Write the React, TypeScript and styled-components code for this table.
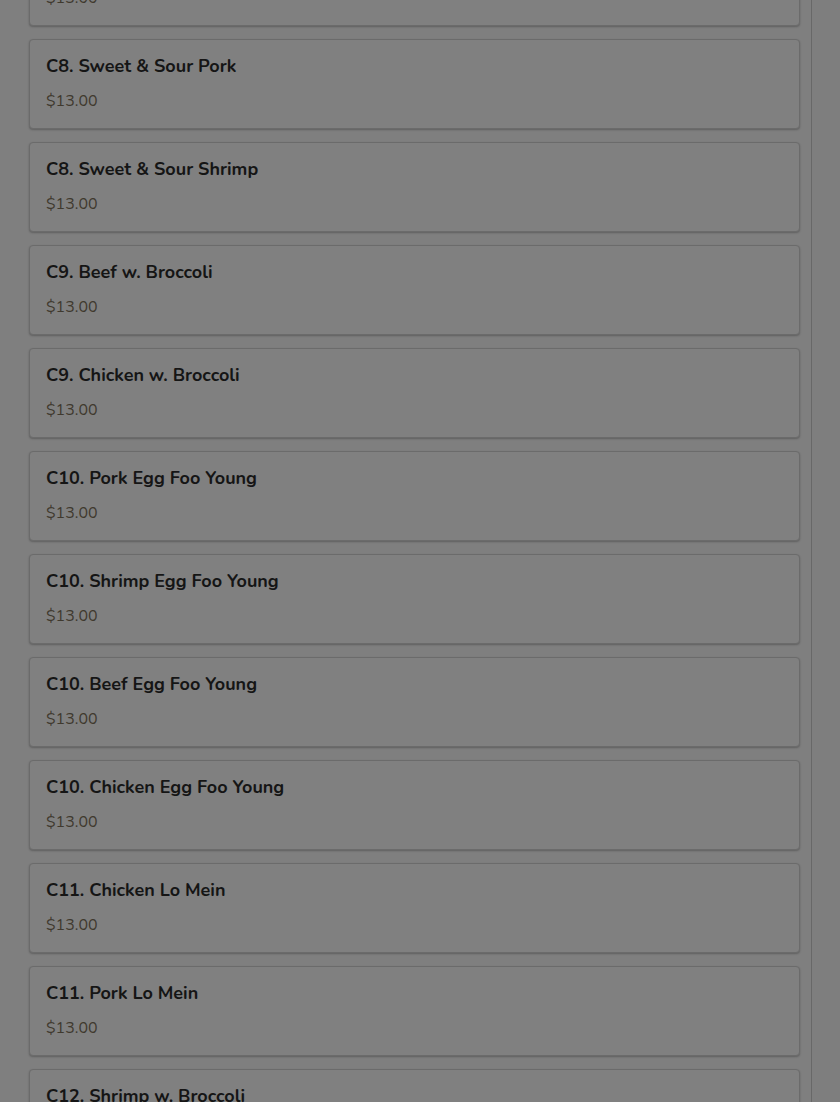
import styled, { createGlobalStyle } from 'styled-components';

const GlobalStyle = createGlobalStyle`
    html, body {
        margin: 0;
        padding: 0;
        background: #7f7f7f;
        overflow: hidden;
    }
`;

const Page = styled.div`
    height: 1102px;
    overflow: hidden;
    display: flex;
`;

const Panel = styled.div`
    width: 811px;
    height: 1102px;
    overflow: hidden;
    border-right: 1px solid #686868;
    background: #7f7f7f;
`;

const Rail = styled.div`
    flex: 1;
    background: #7e7e7e;
`;

const List = styled.ul`
    list-style-type: none;
    margin: -64px 0 0 0;
    padding: 0 11px 0 29px;
    display: flex;
    flex-flow: column nowrap;
    gap: 13px;
`;

const Card = styled.li`
    box-sizing: border-box;
    height: 90px;
    padding: 14px 16px 0 16px;
    background: #808080;
    border: 1px solid #6b6b6b;
    border-radius: 4px;
    box-shadow: 0 1px 2px rgba(0, 0, 0, 0.25);
    font-family: 'Nunito', Lato, 'Noto Sans', sans-serif;
`;

const Title = styled.div`
    font-size: 18px;
    font-weight: 700;
    color: #151515;
    line-height: 24px;
`;

const Price = styled.div`
    margin-top: 12px;
    font-size: 16px;
    color: #3f392e;
    line-height: 22px;
`;

const items = [
    'C7. Sweet & Sour Chicken',
    'C8. Sweet & Sour Pork',
    'C8. Sweet & Sour Shrimp',
    'C9. Beef w. Broccoli',
    'C9. Chicken w. Broccoli',
    'C10. Pork Egg Foo Young',
    'C10. Shrimp Egg Foo Young',
    'C10. Beef Egg Foo Young',
    'C10. Chicken Egg Foo Young',
    'C11. Chicken Lo Mein',
    'C11. Pork Lo Mein',
    'C12. Shrimp w. Broccoli',
];

export default function App() {
    return (
        <Page>
            <GlobalStyle />
            <Panel>
                <List>
                    {items.map((name) => (
                        <Card key={name}>
                            <Title>{name}</Title>
                            <Price>$13.00</Price>
                        </Card>
                    ))}
                </List>
            </Panel>
            <Rail />
        </Page>
    );
}
